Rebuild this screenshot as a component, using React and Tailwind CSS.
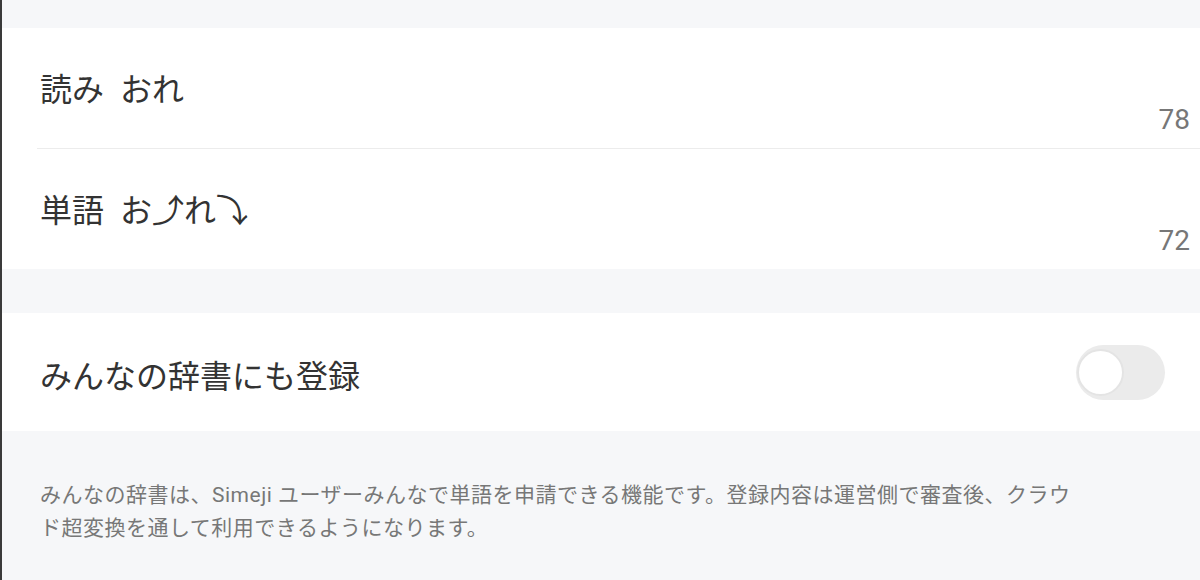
const JP = "font-['Noto_Sans_CJK_JP',sans-serif]";

function WordRow({ label, value, count }) {
  return (
    <div className="flex h-[120px] items-end justify-between pl-[38px] pr-[10px]">
      <div className="flex self-start pt-[39px] text-[32px] leading-[40px] text-[#333]">
        <span>{label}</span>
        <span className="ml-[16px]">{value}</span>
      </div>
      <span className="pb-[12px] font-['Roboto',sans-serif] text-[28px] leading-[32px] text-[#777]">{count}</span>
    </div>
  );
}

function Toggle() {
  return (
    <div className="flex h-[55px] w-[89px] items-center rounded-full bg-[#ebebeb] px-[1px]">
      <div className="h-[47px] w-[47px] rounded-full border-[2px] border-[#e4e4e4] bg-white" />
    </div>
  );
}

export default function App() {
  return (
    <div className={`h-[580px] w-[1200px] overflow-hidden border-l-[2px] border-[#3a3a3a] bg-[#f6f7f9] ${JP}`}>
      <div className="h-[28px]" />

      {/* word card */}
      <div className="bg-white">
        <WordRow label="読み" value="おれ" count="78" />
        <div className="ml-[35px] h-px bg-[#ececec]" />
        <WordRow label="単語" value="お⤴れ⤵" count="72" />
      </div>

      <div className="h-[44px]" />

      {/* shared dictionary switch */}
      <div className="flex h-[118px] items-center justify-between bg-white pl-[38px] pr-[35px]">
        <span className="pt-[4px] text-[32px] leading-[40px] text-[#333]">みんなの辞書にも登録</span>
        <Toggle />
      </div>

      <div className="pl-[38px] pt-[48px]">
        <p className="w-[1045px] font-['Roboto','Noto_Sans_CJK_JP',sans-serif] text-[21px] leading-[33px] tracking-[0.5px] text-[#777]">
          みんなの辞書は、Simeji ユーザーみんなで単語を申請できる機能です。登録内容は運営側で審査後、クラウド超変換を通して利用できるようになります。
        </p>
      </div>
    </div>
  );
}
